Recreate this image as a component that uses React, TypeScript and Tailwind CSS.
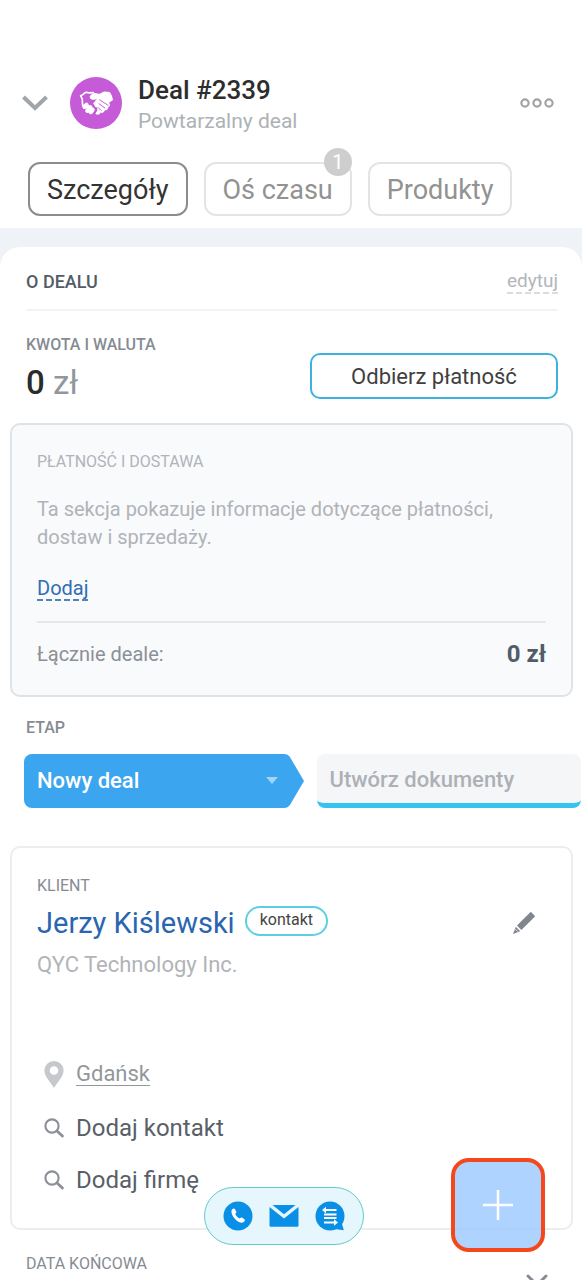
import { useState } from 'react';
import type { ReactNode } from 'react';
import { clsx } from 'clsx';

const TABS = [
  { id: 'details', label: 'Szczegóły' },
  { id: 'timeline', label: 'Oś czasu', badge: 1 },
  { id: 'products', label: 'Produkty' },
];

function HandshakeIcon() {
  return (
    <svg viewBox="0 0 110 84" className="w-9" fill="none" aria-hidden="true">
      {/* left cuff and thumb */}
      <path
        d="M8 20 13 31 14 50M9 21 24 10 34 12 47 11"
        stroke="#fff"
        strokeWidth="5"
        strokeLinejoin="round"
        strokeLinecap="round"
      />
      {/* left fingers */}
      <path
        d="M20 54 26 49M29 66 37 56M39 70 44 63"
        stroke="#fff"
        strokeWidth="14"
        strokeLinecap="round"
      />
      {/* right hand */}
      <path
        d="M36 22C43 12 51 11 60 14C69 17 72 10 81 8L97 9C103 17 106 26 107 34L95 42C99 48 99 53 93 55C92 63 87 66 82 65C79 72 74 75 69 72C66 79 60 81 53 76L59 66C61 59 57 54 52 54C50 48 48 46 46 44L58 30C50 36 34 33 36 22Z"
        fill="#fff"
      />
      <path
        d="M66 33 92 50M64 45 82 58M62 57 71 66"
        stroke="#c55bd6"
        strokeWidth="3"
        strokeLinecap="round"
      />
    </svg>
  );
}

function SearchIcon() {
  return (
    <svg viewBox="0 0 20 20" className="size-5" fill="none" stroke="#8b9098" aria-hidden="true">
      <circle cx="8" cy="8" r="6.6" strokeWidth="2.1" />
      <path d="m13 13 5.4 5" strokeWidth="2.8" strokeLinecap="round" />
    </svg>
  );
}

function PinIcon() {
  return (
    <svg viewBox="0 0 20 27" className="h-[27px] w-5" aria-hidden="true">
      <path
        fillRule="evenodd"
        fill="#c5c9cd"
        d="M10 0a9.6 9.6 0 0 1 9.6 9.6C19.6 16 13.5 21 10 27 6.5 21 .4 16 .4 9.6A9.6 9.6 0 0 1 10 0Zm0 5.2a4.3 4.3 0 1 0 0 8.6 4.3 4.3 0 0 0 0-8.6Z"
      />
    </svg>
  );
}

function PencilIcon() {
  return (
    <svg viewBox="0 0 24 24" className="size-6" fill="#80868e" aria-hidden="true">
      <path d="M18.8.8 23.2 5.2 9.4 19 5 14.6Z" />
      <path d="M3.8 15.8 8.2 20.2 1 23Z" />
      <path d="m3.4 18.2 2.4 2.4" stroke="#fff" strokeWidth=".8" />
    </svg>
  );
}

function PhoneIcon() {
  return (
    <svg viewBox="0 0 30 30" className="size-[30px]" aria-hidden="true">
      <circle cx="15" cy="15" r="14.5" fill="#0a8fe6" />
      <path
        fill="#fff"
        d="M9.2 8.3c1.3-1.3 2.3-1.2 3 .2l1 2c.4.9 0 1.6-.9 2.3.5 2.1 2.2 3.9 4.5 4.7.8-1 1.6-1.2 2.5-.7l1.7 1.1c1.2.8 1.2 1.7 0 2.9-1.8 1.7-5 .9-8-1.9-3.6-3.2-5.8-8.5-3.8-10.6Z"
      />
    </svg>
  );
}

function MailIcon() {
  return (
    <svg viewBox="0 0 30 22" className="h-[22px] w-[30px]" fill="#0a8fe6" aria-hidden="true">
      <path d="M3.5 0h23L15 9.2Z" />
      <path d="M.5 2 15 13.5 29.5 2v18.5a1.2 1.2 0 0 1-1.2 1.2H1.7A1.2 1.2 0 0 1 .5 20.5Z" />
    </svg>
  );
}

function ChatIcon() {
  return (
    <svg viewBox="0 0 30 30" className="size-[30px]" aria-hidden="true">
      <circle cx="15" cy="15" r="14.5" fill="#0a8fe6" />
      <path d="m26.5 21 2.3 8.2-9-1.2Z" fill="#0a8fe6" />
      <path d="M10 9h11.5M9 13.5h12.5M9 17h12.5M9 21.5h11" stroke="#fff" strokeWidth="1.9" />
      <path d="M11 5.8 7 9l4 3.2ZM19 18.3l4 3.2-4 3.2Z" fill="#fff" />
    </svg>
  );
}

function Label({ children }: { children: ReactNode }) {
  return <h3 className="text-base leading-5 text-[#868b93]">{children}</h3>;
}

function Header() {
  const [active, setActive] = useState('details');

  return (
    <header className="bg-white px-7 pt-[72px] pb-3">
      <div className="flex items-center">
        <button type="button" aria-label="Zwiń" className="-ml-1.5 shrink-0">
          <svg viewBox="0 0 26 16" className="h-4 w-[26px]" fill="none" aria-hidden="true">
            <path d="m1.5 2 11.5 11 11.5-11" stroke="#a0a5aa" strokeWidth="4" />
          </svg>
        </button>
        <div className="ml-[22px] flex size-[52px] shrink-0 items-center justify-center rounded-full bg-[#c55bd6]">
          <HandshakeIcon />
        </div>
        <div className="ml-4 flex-1">
          <h1 className="text-[26px] leading-9 font-medium text-[#2d2d2d]">Deal #2339</h1>
          <p className="text-[21px] leading-[26px] text-[#adb2b6]">Powtarzalny deal</p>
        </div>
        <button type="button" aria-label="Więcej" className="shrink-0">
          <svg viewBox="0 0 34 10" className="h-2.5 w-[34px]" fill="none" stroke="#a3a3a3" strokeWidth="2.2" aria-hidden="true">
            <circle cx="5" cy="5" r="3.6" />
            <circle cx="17" cy="5" r="3.6" />
            <circle cx="29" cy="5" r="3.6" />
          </svg>
        </button>
      </div>

      <nav className="mt-7 flex gap-4">
        {TABS.map((tab) => (
          <button
            key={tab.id}
            type="button"
            onClick={() => setActive(tab.id)}
            className={clsx(
              'relative h-[54px] rounded-xl border-2 px-[17px] pt-0.5 text-[27px]',
              active === tab.id ? 'border-[#8c8c8c] text-[#333]' : 'border-[#e4e4e4] text-[#929292]'
            )}
          >
            {tab.label}
            {tab.badge != null && (
              <span className="absolute -top-4 -right-0.5 flex size-7 items-center justify-center rounded-full bg-[#cecece] text-xl text-white">
                {tab.badge}
              </span>
            )}
          </button>
        ))}
      </nav>
    </header>
  );
}

function PaymentCard() {
  return (
    <section className="mt-[22px] mr-[9px] ml-2.5 rounded-[10px] border-2 border-[#e0e3e6] bg-[#f9fafc] px-[25px] pt-[27px] pb-[25px]">
      <h3 className="text-base leading-5 text-[#b0b3b9]">PŁATNOŚĆ I DOSTAWA</h3>
      <p className="mt-[23px] text-xl leading-7 text-[#b0b3b8]">
        Ta sekcja pokazuje informacje dotyczące płatności, dostaw i sprzedaży.
      </p>
      <a
        href="#dodaj"
        className="mt-[26px] inline-block border-b-2 border-dashed border-[#5283b9] text-xl leading-[22px] text-[#2f6db5]"
      >
        Dodaj
      </a>
      <div className="mt-[19px] flex items-center justify-between border-t-2 border-[#e6e8ea] pt-[15px] leading-8">
        <span className="text-xl text-[#8b9097]">Łącznie deale:</span>
        <span className="text-2xl font-bold text-[#525c69]">0 zł</span>
      </div>
    </section>
  );
}

function Stages() {
  return (
    <section className="mt-[21px] pl-6">
      <div className="pl-0.5">
        <h3 className="text-base leading-5 font-medium text-[#868b93]">ETAP</h3>
      </div>
      <div className="mt-4 grid h-[54px] grid-cols-[279fr_265fr] gap-[13px]">
        <button type="button" className="flex text-left">
          <span className="flex h-full flex-1 items-center justify-between rounded-l-lg bg-[#3ba6ef] pb-0.5 pl-[13px] text-[22px] font-medium text-white">
            Nowy deal
            <svg viewBox="0 0 12 7" className="h-[7px] w-3" fill="#a0d4f9" aria-hidden="true">
              <path d="M0 0h12L6 7Z" />
            </svg>
          </span>
          <svg viewBox="0 0 26 54" className="h-full w-[26px] shrink-0" fill="#3ba6ef" aria-hidden="true">
            <path d="M0 0h6c3 0 5 1.5 6.5 4L26 27 12.5 50c-1.5 2.5-3.5 4-6.5 4H0Z" />
          </svg>
        </button>
        <button
          type="button"
          className="mr-px rounded-lg border-b-[5px] border-[#35c4ee] bg-[#f5f6f8] pt-0.5 pl-[13px] text-left text-[22px] font-medium text-[#adb1b6]"
        >
          Utwórz dokumenty
        </button>
      </div>
    </section>
  );
}

function ClientCard() {
  return (
    <section className="mt-[38px] mr-[9px] ml-2.5 rounded-[10px] border-2 border-[#ededee] px-[25px] pt-7 pb-8">
      <Label>KLIENT</Label>
      <div className="mt-[7px] flex items-center">
        <a href="#kontakt" className="text-[29px] leading-10 text-[#2a66b0]">
          Jerzy Kiślewski
        </a>
        <span className="mb-1 ml-2.5 h-[30px] rounded-full border-2 border-[#5ccfe0] px-[13px] text-base leading-6 text-[#444]">
          kontakt
        </span>
        <button type="button" aria-label="Edytuj klienta" className="mr-2.5 ml-auto">
          <PencilIcon />
        </button>
      </div>
      <p className="mt-1.5 text-[22px] leading-8 text-[#b1b4b8]">QYC Technology Inc.</p>

      <ul className="mt-[77px] space-y-5 pl-[7px] text-2xl leading-8 text-[#595f68]">
        <li className="flex items-center gap-3 pb-0.5">
          <PinIcon />
          <a href="#gdansk" className="text-[22px] text-[#92979a] underline decoration-1 underline-offset-4">
            Gdańsk
          </a>
        </li>
        <li>
          <button type="button" className="flex items-center gap-3">
            <SearchIcon />
            Dodaj kontakt
          </button>
        </li>
        <li>
          <button type="button" className="flex items-center gap-3">
            <SearchIcon />
            Dodaj firmę
          </button>
        </li>
      </ul>
    </section>
  );
}

export default function App() {
  return (
    <div className="flex h-dvh flex-col bg-[#eff3f7] font-[Roboto,sans-serif]">
      <Header />

      <main className="mt-[19px] min-h-0 flex-1 overflow-y-auto rounded-t-[20px] bg-white pt-[23px] [scrollbar-width:none]">
        <section className="pr-6 pl-[26px]">
          <div className="flex items-start justify-between border-b-2 border-[#f3f3f4] pb-[15px]">
            <h2 className="text-lg leading-6 font-medium text-[#525c66]">O DEALU</h2>
            <a
              href="#edytuj"
              className="border-b-2 border-dashed border-[#dadcdf] text-[19px] leading-[22px] text-[#b3b6bb]"
            >
              edytuj
            </a>
          </div>
          <div className="mt-6 flex items-start justify-between">
            <div>
              <h3 className="text-base leading-5 font-medium text-[#868b93]">KWOTA I WALUTA</h3>
              <p className="mt-2.5 text-[33px] leading-9 text-[#92979f]">
                <span className="font-medium text-[#2b2b2b]">0</span> zł
              </p>
            </div>
            <button
              type="button"
              className="mt-[18px] h-[46px] w-[248px] rounded-[10px] border-2 border-[#3cb3de] text-[22px] text-[#3f3f3f]"
            >
              Odbierz płatność
            </button>
          </div>
        </section>

        <PaymentCard />
        <Stages />
        <ClientCard />

        <section className="mt-6 px-[26px] pb-6">
          <Label>DATA KOŃCOWA</Label>
          <button type="button" aria-label="Rozwiń" className="mr-2 ml-auto block">
            <svg viewBox="0 0 22 14" className="h-3.5 w-[22px]" fill="none" aria-hidden="true">
              <path d="m2 2 9 9 9-9" stroke="#868b93" strokeWidth="3" strokeLinecap="round" />
            </svg>
          </button>
        </section>
      </main>

      {/* Quick contact bar */}
      <div className="pointer-events-none fixed inset-x-0 bottom-[35px] flex justify-center pr-3.5">
        <div className="pointer-events-auto flex h-[58px] items-center gap-4 rounded-full border border-[#62cbc9] bg-[#e5f7fc] px-[18px]">
          <button type="button" aria-label="Zadzwoń">
            <PhoneIcon />
          </button>
          <button type="button" aria-label="E-mail">
            <MailIcon />
          </button>
          <button type="button" aria-label="Czat">
            <ChatIcon />
          </button>
        </div>
      </div>

      <button
        type="button"
        aria-label="Dodaj"
        className="fixed right-[37px] bottom-7 flex size-[94px] items-center justify-center rounded-[18px] border-4 border-[#f4471c] bg-[#9ac8ff]/80"
      >
        <svg viewBox="0 0 30 30" className="size-[30px]" stroke="#fff" strokeWidth="2.5" aria-hidden="true">
          <path d="M15 0v30M0 15h30" />
        </svg>
      </button>
    </div>
  );
}
